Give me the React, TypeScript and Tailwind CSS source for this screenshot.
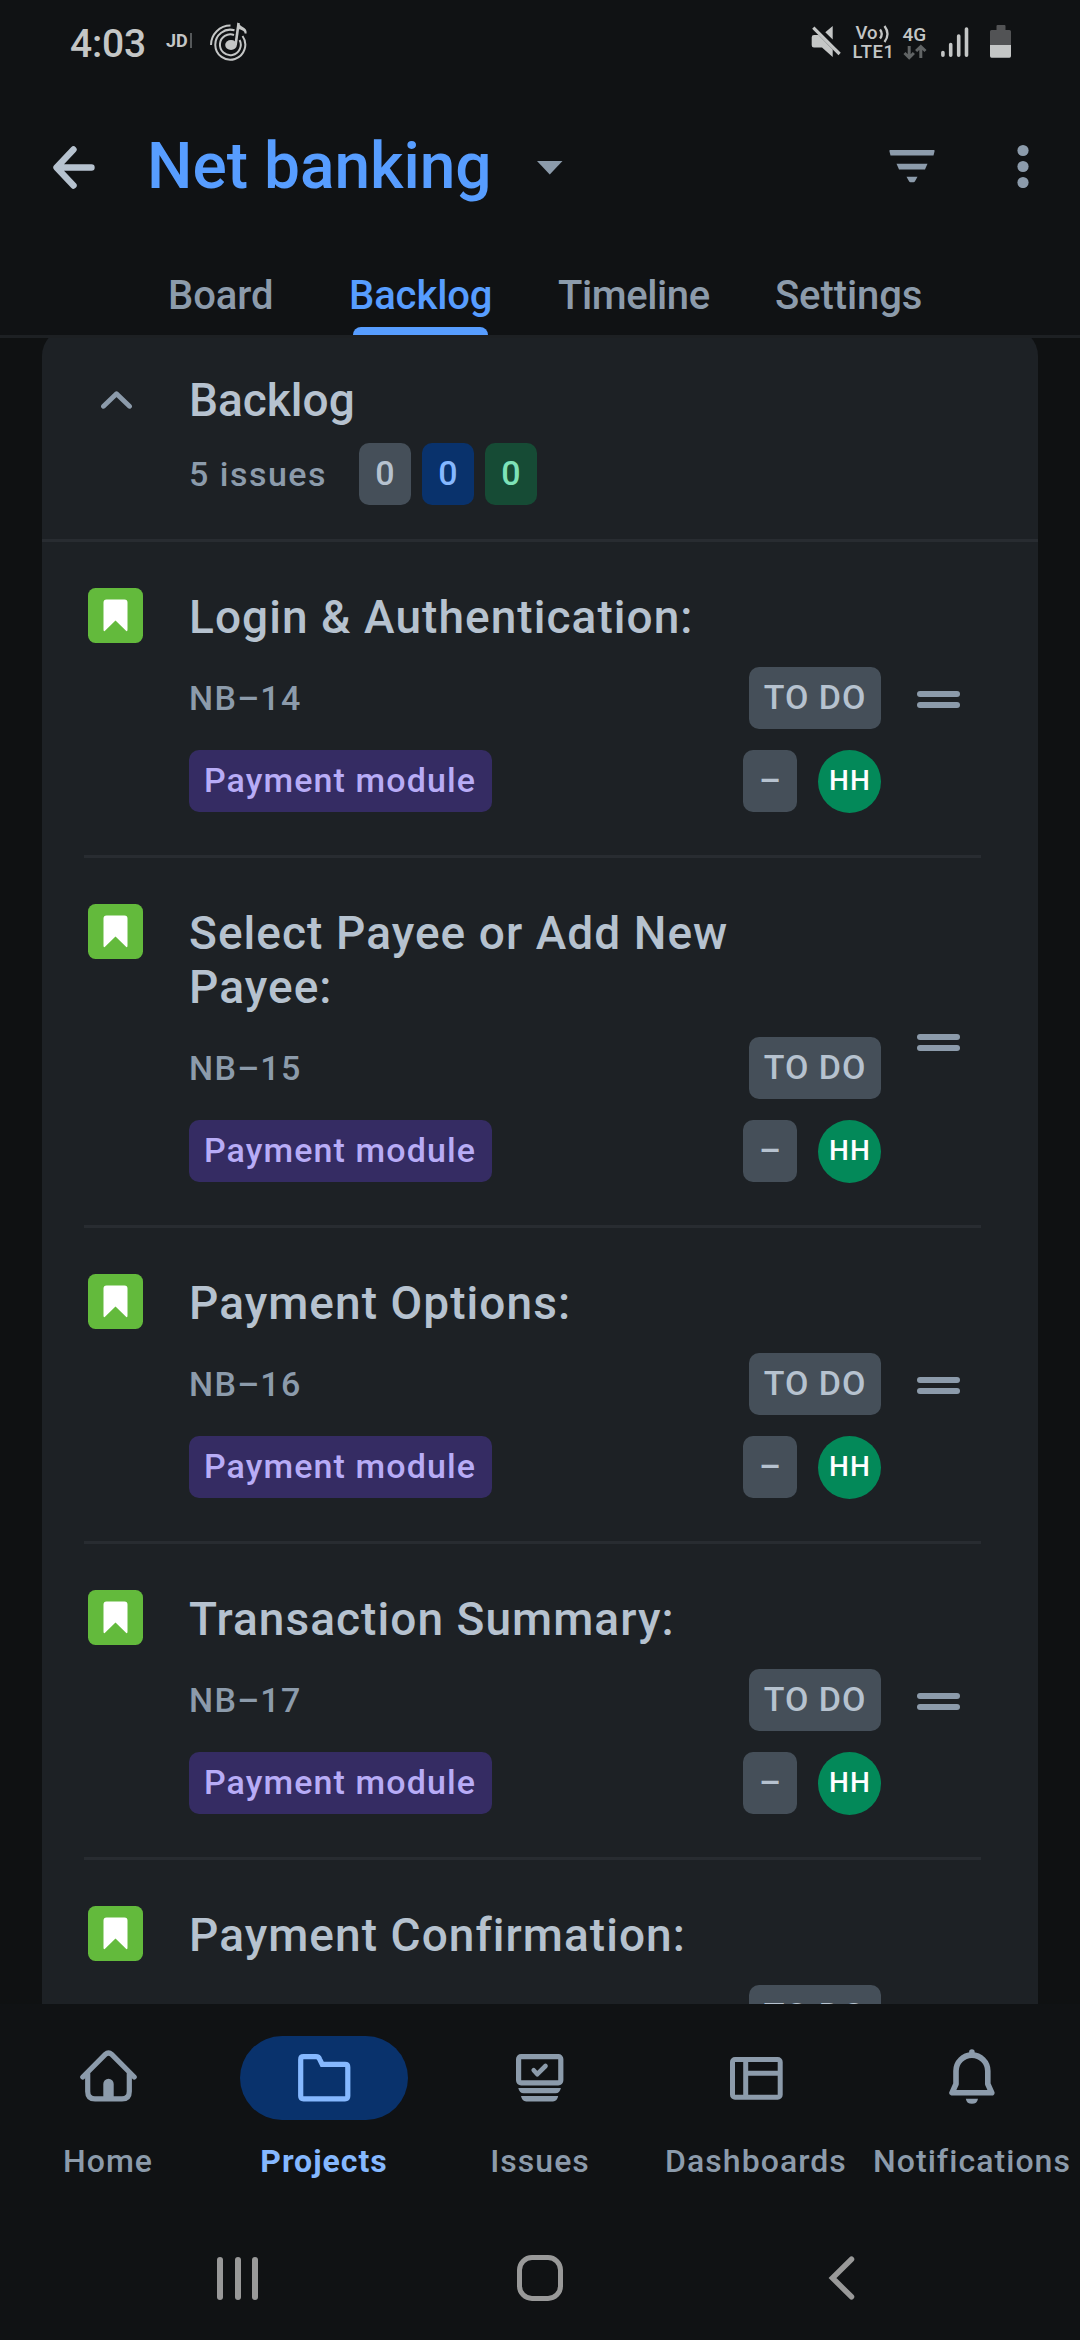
import type { ReactNode } from "react";

type Issue = { id: string; title: string };

const issues: Issue[] = [
  { id: "NB–14", title: "Login & Authentication:" },
  { id: "NB–15", title: "Select Payee or Add New Payee:" },
  { id: "NB–16", title: "Payment Options:" },
  { id: "NB–17", title: "Transaction Summary:" },
  { id: "NB–18", title: "Payment Confirmation:" },
];

function StatusBar() {
  return (
    <div className="flex h-[84px] shrink-0 items-start text-[#c4c6c6]">
      <span className="ml-[70px] mt-[21px] w-[96px] text-[39px] font-medium leading-[46px] tracking-[-0.2px]">4:03</span>
      <span className="mt-[31px] w-[24px] text-[18px] font-bold leading-[20px]">JD</span>
      <span className="mt-[33px] h-[15px] w-[1.5px] bg-[#55585a]" />
      <svg className="ml-[18px] mt-[22px]" width="40" height="40" viewBox="0 0 40 40" fill="none" stroke="currentColor" strokeWidth="2">
        <path d="M1 23A19.5 19.5 0 0 1 20.5 3.6" />
        <path d="M24.5 8.3A15 15 0 1 0 32.5 14" />
        <path d="M24 13A10.4 10.4 0 1 0 29.6 18" />
        <ellipse cx="21" cy="23" rx="5.8" ry="5" fill="currentColor" stroke="none" />
        <path d="M25.6 23L28.6 1" strokeWidth="2.6" />
        <path d="M27.6 0.3C29.5 5 37.5 5 36.6 11.5H34.6C34.8 8.5 31 7.8 28.2 7Z" fill="currentColor" stroke="none" />
      </svg>
      <svg className="ml-[561px] mt-[25px]" width="31" height="34" viewBox="0 0 31 34" fill="currentColor">
        <path d="M21.7 1V14.5L14.3 7.2ZM3 10H7.5L21.7 24.5V32L11 22.5H3Q.7 22.5 .7 20.2V12.3Q.7 10 3 10Z" />
        <path d="M2.3 2.6L28.6 29" stroke="currentColor" strokeWidth="3.2" />
      </svg>
      <div className="ml-[11px] mt-[25px] w-[46px]">
        <div className="flex h-[17px] items-center pl-[3px] text-[18.500px] font-medium leading-[17px]">
          Vo
          <svg className="ml-[1px]" width="12" height="18" viewBox="0 0 12 18" fill="none" stroke="currentColor" strokeWidth="2.300">
            <path d="M1 4.500Q4.500 9 1 13.500M5.500 1Q11.500 9 5.500 17" />
          </svg>
        </div>
        <div className="pt-[1px] text-[18.500px] font-medium leading-[18px] tracking-[0.500px]">LTE1</div>
      </div>
      <div className="ml-[4px] mt-[26px] w-[30px]">
        <div className="text-[19px] font-medium leading-[18px]">4G</div>
        <svg width="24" height="17" viewBox="0 0 24 17" fill="none" stroke="#616465" strokeWidth="3">
          <path d="M6.2 2V13M1.5 9L6.2 13.7L10.9 9M17.8 14V3M13.1 7L17.8 2.5L22.5 7" />
        </svg>
      </div>
      <svg className="ml-[8px] mt-[26px]" width="30" height="33" viewBox="0 0 30 33" stroke="currentColor" strokeWidth="3.6" strokeLinecap="round">
        <path d="M1.9 26.5V29.3M9.7 18.5V29.3M17.7 10V29.3M25.5 3V29.3" />
      </svg>
      <svg className="ml-[19px] mt-[25px]" width="22" height="33" viewBox="0 0 22 33">
        <path d="M7.5 0H14.5Q15.5 0 15.5 1V5H19.5Q21 5 21 6.500V20H0V6.500Q0 5 1.500 5H6.500V1Q6.500 0 7.500 0Z" fill="#525355" />
        <path d="M0 20H21V31Q21 32.700 19.500 32.700H1.500Q0 32.700 0 31Z" fill="currentColor" />
      </svg>
    </div>
  );
}

function Toolbar() {
  return (
    <div className="flex h-[164px] shrink-0 items-center">
      <svg className="ml-[53px] mt-[2px]" width="42" height="44" viewBox="0 0 42 44" fill="none" stroke="#b6c2cf" strokeWidth="6.4" strokeLinecap="round" strokeLinejoin="round">
        <path d="M20.500 4.500L3.500 22.500L20.500 40.500M4 22.500H38.500" />
      </svg>
      <h1 className="ml-[52px] mt-[2px] w-[390px] whitespace-nowrap text-[64px] font-medium leading-[76px] text-[#579dff]">Net banking</h1>
      <svg className="mt-[3px]" width="26" height="14" viewBox="0 0 26 14" fill="#8c9bab">
        <path d="M0 0H25.500L12.750 13.500Z" />
      </svg>
      <svg className="ml-[326px]" width="46" height="34" viewBox="0 0 46 34" fill="#8c9bab">
        <path d="M1 1H45Q46 1 45.500 2.500L44.500 6.600H1.500L.5 2.500Q0 1 1 1Z" />
        <path d="M7.500 14.700H38.500L36 20.400H10Z" />
        <path d="M17.500 27.700H28.500L26 32.200Q25.500 33.300 24.500 33.300H21.500Q20.500 33.300 20 32.200Z" />
      </svg>
      <svg className="ml-[82px]" width="12" height="44" viewBox="0 0 12 44" fill="#8c9bab">
        <circle cx="6" cy="6.500" r="5.600" />
        <circle cx="6" cy="22.500" r="5.600" />
        <circle cx="6" cy="38.500" r="5.600" />
      </svg>
    </div>
  );
}

function Tabs() {
  return (
    <nav className="grid h-[90px] shrink-0 grid-cols-[181px_209px_217px_200px] border-b-[3px] border-[#1d2023] pl-[168px] pt-[16px] text-[40px] font-medium leading-[64px] tracking-[-0.1px] text-[#8c9bab]">
      <span>Board</span>
      <div className="text-[#579dff]">
        Backlog
        <div className="ml-[4px] -mt-[1px] h-[8px] w-[135px] rounded-t-[8px] bg-[#579dff]" />
      </div>
      <span className="tracking-[-0.4px]">Timeline</span>
      <span>Settings</span>
    </nav>
  );
}

function BacklogHeader() {
  return (
    <div className="flex h-[214px] shrink-0 border-b-[3px] border-[#282c31] pl-[59px] pt-[45px]">
      <svg className="mt-[18px]" width="31" height="18" viewBox="0 0 31 18" fill="none" stroke="#8c9bab" strokeWidth="4.800" strokeLinecap="round" strokeLinejoin="round">
        <path d="M2.500 15.300L15.500 2.700L28.500 15.300" />
      </svg>
      <div className="ml-[57px]">
        <h2 className="text-[46px] font-medium leading-[54px] text-[#b6c2cf]">Backlog</h2>
        <div className="mt-[16px] flex h-[62px] items-center gap-[11px] text-[34px] font-medium leading-[61px]">
          <span className="w-[159px] whitespace-nowrap tracking-[1.500px] text-[#8c9bab]">5 issues</span>
          <span className="h-[62px] w-[52px] rounded-[10px] bg-[#454f59] text-center text-[#b6c2cf]">0</span>
          <span className="h-[62px] w-[52px] rounded-[10px] bg-[#09326c] text-center text-[#85b8ff]">0</span>
          <span className="h-[62px] w-[52px] rounded-[10px] bg-[#164b35] text-center text-[#7ee2b8]">0</span>
        </div>
      </div>
    </div>
  );
}

function IssueRow({ issue }: { issue: Issue }) {
  return (
    <div className="ml-[42px] mr-[57px] flex shrink-0 border-b-[3px] border-[#282c31] pl-[4px]">
      <svg className="mt-[46px] shrink-0" width="55" height="55" viewBox="0 0 55 55">
        <rect width="55" height="55" rx="7.500" fill="#63ba3c" />
        <path d="M18.500 11.500H36.500Q39.500 11.500 39.500 14.500V41.500Q39.500 44.300 37.500 42.300L27.500 32.500L17.500 42.300Q15.500 44.300 15.500 41.500V14.500Q15.500 11.500 18.500 11.500Z" fill="#fff" />
      </svg>
      <div className="ml-[46px] w-[692px] pb-[42px] pt-[48px] font-medium">
        <h3 className="w-[600px] text-[46px] leading-[54px] tracking-[1.050px] text-[#b6c2cf]">{issue.title}</h3>
        <div className="mt-[23px] flex h-[62px] items-start justify-between text-[34px] leading-[60px]">
          <span className="pt-[1px] tracking-[1.300px] text-[#8c9bab]">{issue.id}</span>
          <span className="h-[62px] w-[132px] rounded-[10px] bg-[#454f59] text-center tracking-[1px] text-[#b6c2cf]">TO DO</span>
        </div>
        <div className="mt-[21px] flex items-start text-[34px] leading-[60px]">
          <span className="mr-auto h-[62px] w-[303px] rounded-[10px] bg-[#352c63] pl-[15px] tracking-[1.100px] text-[#b8acf6]">Payment module</span>
          <span className="h-[62px] w-[54px] rounded-[10px] bg-[#454f59] text-center text-[#b6c2cf]">–</span>
          <span className="ml-[21px] h-[63px] w-[63px] rounded-full bg-[#038959] pl-[1px] text-center text-[28px] leading-[62px] tracking-[1.200px] text-white">HH</span>
        </div>
      </div>
      <div className="ml-[36px] mt-[1px] flex w-[43px] flex-col justify-center gap-[5px]">
        <span className="h-[6px] rounded-full bg-[#8c9bab]" />
        <span className="h-[6px] rounded-full bg-[#8c9bab]" />
      </div>
    </div>
  );
}

function NavItem({ label, active, children }: { label: string; active?: boolean; children: ReactNode }) {
  return (
    <div className={active ? "flex flex-col items-center text-[#85b8ff]" : "flex flex-col items-center text-[#8c9bab]"}>
      <div className={active ? "flex h-[84px] w-[168px] items-center justify-center rounded-full bg-[#09326c]" : "flex h-[84px] w-[168px] items-center justify-center"}>
        {children}
      </div>
      <span className={active ? "mt-[21px] text-[32px] font-bold leading-[40px] tracking-[1px]" : "mt-[21px] text-[32px] font-medium leading-[40px] tracking-[1.050px]"}>
        {label}
      </span>
    </div>
  );
}

function BottomNav() {
  return (
    <nav className="grid h-[212px] shrink-0 grid-cols-5 bg-[#101214] pt-[32px]">
      <NavItem label="Home">
        <svg className="-mt-[4px]" width="57" height="52" viewBox="0 0 57 52" fill="none" stroke="currentColor" strokeWidth="5.200" strokeLinecap="round">
          <path d="M2.800 27L25.300 4.400Q28.500 1.400 31.700 4.400L54.200 27" />
          <path d="M7.700 24V41.500Q7.700 48.900 15 48.900H42Q49.300 48.900 49.300 41.500V24" />
          <path d="M23.300 49V34A5.200 5.200 0 0 1 33.700 34V49Z" fill="currentColor" stroke="none" />
        </svg>
      </NavItem>
      <NavItem label="Projects" active>
        <svg width="53" height="48" viewBox="0 0 53 48" fill="none" stroke="currentColor" strokeWidth="5.200">
          <path d="M2.700 5.500Q2.700 2.700 5.500 2.700H18Q20.800 2.700 21.700 5.300L24.200 10.400H47Q49.800 10.400 49.800 13.200V42Q49.800 44.800 47 44.800H5.500Q2.700 44.800 2.700 42Z" />
        </svg>
      </NavItem>
      <NavItem label="Issues">
        <svg width="48" height="48" viewBox="0 0 48 48" fill="none" stroke="currentColor">
          <rect x="2.600" y="2.600" width="42.200" height="26.200" rx="2.500" strokeWidth="5.200" />
          <path d="M17.700 16.300L21.300 20.200L29.500 12" strokeWidth="4.600" strokeLinecap="round" strokeLinejoin="round" />
          <path d="M2.300 34H44.900Q43.800 39.300 39.500 39.300H7.700Q3.400 39.300 2.300 34ZM5 42H42.200Q41.200 47.400 37 47.400H10.200Q6 47.400 5 42Z" fill="currentColor" stroke="none" />
        </svg>
      </NavItem>
      <NavItem label="Dashboards">
        <svg width="53" height="43" viewBox="0 0 53 43" fill="none" stroke="currentColor" strokeWidth="5">
          <rect x="2.500" y="2.500" width="47.700" height="37.700" rx="2.500" />
          <path d="M15.700 3V40M15.700 16.300H50" />
        </svg>
      </NavItem>
      <NavItem label="Notifications">
        <svg className="-mt-[3px]" width="46" height="56" viewBox="0 0 46 56" fill="none" stroke="currentColor" strokeWidth="5.600" strokeLinejoin="round">
          <path d="M7 22V35L3 43.800H42.800L38.800 35V22A15.900 15.900 0 0 0 7 22Z" />
          <path d="M22.900 3V5" strokeLinecap="round" />
          <path d="M16.800 49.700H29A6.200 6.300 0 0 1 16.800 49.700Z" fill="currentColor" stroke="none" />
        </svg>
      </NavItem>
    </nav>
  );
}

function SystemNav() {
  return (
    <div className="flex h-[124px] shrink-0 items-center bg-[#101214]">
      <div className="ml-[217px] flex h-[43px] w-[41px] justify-between">
        <span className="w-[6px] rounded-full bg-[#999]" />
        <span className="w-[6px] rounded-full bg-[#999]" />
        <span className="w-[6px] rounded-full bg-[#999]" />
      </div>
      <div className="ml-[259px] h-[46px] w-[46px] rounded-[15px] border-[5.500px] border-[#999]" />
      <svg className="ml-[265px]" width="27" height="44" viewBox="0 0 27 44" fill="none" stroke="#999" strokeWidth="5.500" strokeLinecap="round">
        <path d="M23.500 3.200L4.500 22L23.500 40.800" />
      </svg>
    </div>
  );
}

export default function App() {
  return (
    <div className="flex h-[2340px] w-[1080px] flex-col overflow-hidden bg-[#101214] font-['Roboto',sans-serif]">
      <StatusBar />
      <Toolbar />
      <Tabs />
      <main className="h-[1666px] shrink-0 overflow-hidden bg-[#0f1112] px-[42px]">
        <section className="-mt-[10px] flex flex-col rounded-t-[28px] bg-[#1d2125]">
          <BacklogHeader />
          {issues.map((issue) => (
            <IssueRow key={issue.id} issue={issue} />
          ))}
        </section>
      </main>
      <BottomNav />
      <SystemNav />
    </div>
  );
}
